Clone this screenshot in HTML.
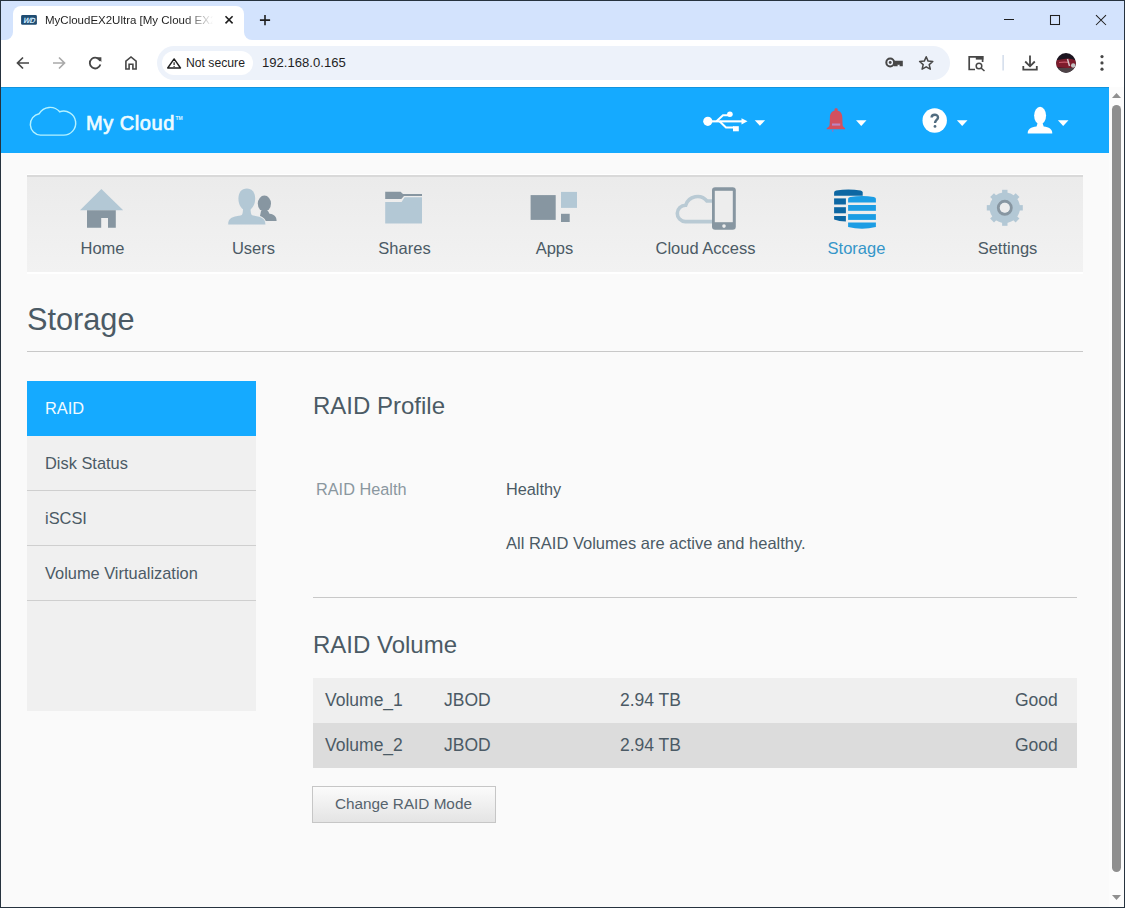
<!DOCTYPE html>
<html><head><meta charset="utf-8">
<style>
*{margin:0;padding:0;box-sizing:border-box}
html,body{width:1125px;height:908px;overflow:hidden;background:#fafafa;font-family:"Liberation Sans",sans-serif;position:relative}
div,svg,span{position:absolute}
.t{white-space:nowrap;color:#4b5a65;line-height:1}
.nl{top:240px;font-size:16.5px;width:151px;text-align:center;color:#4b5a65}
.mi{left:27px;width:229px;height:55px;background:#f0f0f0;border-bottom:1px solid #cfcfcf}
.mi span{left:18px;top:19px;font-size:16.4px;color:#4b5a65;line-height:1;white-space:nowrap}
.dd{width:0;height:0;border-left:5.5px solid transparent;border-right:5.5px solid transparent;border-top:6px solid #fff}
</style></head><body>
<!-- window frame -->
<div style="left:0;top:0;width:1125px;height:908px;background:#26323e"></div>
<div style="left:1px;top:1px;width:1123px;height:39px;background:#d3e3fd"></div>
<div style="left:1px;top:40px;width:1123px;height:47px;background:#fff"></div>
<!-- tab -->
<div style="left:5px;top:32px;width:8px;height:8px;background:#fff"></div>
<div style="left:5px;top:32px;width:8px;height:8px;background:#d3e3fd;border-radius:0 0 8px 0"></div>
<div style="left:244px;top:32px;width:8px;height:8px;background:#fff"></div>
<div style="left:244px;top:32px;width:8px;height:8px;background:#d3e3fd;border-radius:0 0 0 8px"></div>
<div style="left:13px;top:6px;width:231px;height:34px;background:#fff;border-radius:8px 8px 0 0"></div>
<!-- omnibox -->
<div style="left:157px;top:46px;width:793px;height:34px;background:#edf2fa;border-radius:17px"></div>
<div style="left:162px;top:51px;width:91px;height:24px;background:#fff;border-radius:12px"></div>
<!-- page -->
<div style="left:1px;top:87px;width:1108px;height:820px;background:#fafafa"></div>
<div style="left:1px;top:87px;width:1108px;height:66px;background:#15aaff"></div>
<div style="left:1px;top:87px;width:1123px;height:1px;background:rgba(0,0,0,0.13)"></div>
<!-- nav box -->
<div style="left:27px;top:174px;width:1056px;height:100px;background:#fff"></div>
<div style="left:27px;top:175px;width:1056px;height:97px;background:linear-gradient(#ebebeb,#f2f2f2);border-top:2px solid #d9d9d9"></div>
<div class="t nl" style="left:27px">Home</div>
<div class="t nl" style="left:178px">Users</div>
<div class="t nl" style="left:329px">Shares</div>
<div class="t nl" style="left:479px">Apps</div>
<div class="t nl" style="left:630px">Cloud Access</div>
<div class="t nl" style="left:781px;color:#3596c9">Storage</div>
<div class="t nl" style="left:932px">Settings</div>
<!-- title -->
<div class="t" style="left:27px;top:305px;font-size:30.7px">Storage</div>
<div style="left:27px;top:351px;width:1056px;height:1px;background:#c8c8c8"></div>
<!-- left menu -->
<div style="left:27px;top:381px;width:229px;height:330px;background:#f0f0f0"></div>
<div class="mi" style="top:381px;background:#15aaff;border-bottom:none"><span style="color:#f2fbff">RAID</span></div>
<div class="mi" style="top:436px"><span>Disk Status</span></div>
<div class="mi" style="top:491px"><span>iSCSI</span></div>
<div class="mi" style="top:546px"><span>Volume Virtualization</span></div>
<!-- content -->
<div class="t" style="left:313px;top:394px;font-size:24px">RAID Profile</div>
<div class="t" style="left:316px;top:481px;font-size:16.3px;color:#8a979f">RAID Health</div>
<div class="t" style="left:506px;top:481px;font-size:16.3px">Healthy</div>
<div class="t" style="left:506px;top:535px;font-size:16.5px">All RAID Volumes are active and healthy.</div>
<div style="left:313px;top:597px;width:764px;height:1px;background:#c8c8c8"></div>
<div class="t" style="left:313px;top:633px;font-size:24px">RAID Volume</div>
<div style="left:313px;top:678px;width:764px;height:45px;background:#efefef"></div>
<div style="left:313px;top:723px;width:764px;height:45px;background:#dcdcdc"></div>
<div class="t" style="left:325px;top:691.5px;font-size:17.5px">Volume_1</div>
<div class="t" style="left:444px;top:691.5px;font-size:17.5px">JBOD</div>
<div class="t" style="left:620px;top:691.5px;font-size:17.5px">2.94 TB</div>
<div class="t" style="left:1015px;top:691.5px;font-size:17.5px">Good</div>
<div class="t" style="left:325px;top:736.5px;font-size:17.5px">Volume_2</div>
<div class="t" style="left:444px;top:736.5px;font-size:17.5px">JBOD</div>
<div class="t" style="left:620px;top:736.5px;font-size:17.5px">2.94 TB</div>
<div class="t" style="left:1015px;top:736.5px;font-size:17.5px">Good</div>
<div style="left:312px;top:786px;width:184px;height:37px;border:1px solid #c6c6c6;background:linear-gradient(#fbfbfb,#e4e4e4)"></div>
<div class="t" style="left:335px;top:796px;font-size:15.3px;color:#56636d">Change RAID Mode</div>
<!-- scrollbar -->
<div style="left:1109px;top:87px;width:15px;height:820px;background:#fcfcfc"></div>
<div style="left:1112px;top:105px;width:9px;height:767px;background:#8f8f8f;border-radius:4.5px"></div>
<!--CHROME-->
<div class="t" style="left:45px;top:15px;font-size:11.5px;color:#1f1f1f;width:170px;overflow:hidden;-webkit-mask-image:linear-gradient(90deg,#000 140px,transparent 168px)">MyCloudEX2Ultra [My Cloud EX2Ultra]</div>
<div class="t" style="left:186px;top:57px;font-size:12.2px;color:#1f1f1f">Not secure</div>
<div class="t" style="left:262px;top:56px;font-size:13.1px;color:#1f1f1f">192.168.0.165</div>
<div class="t" style="left:86px;top:113px;font-size:20px;color:#eefcff;-webkit-text-stroke:0.7px #eefcff;letter-spacing:0.55px">My Cloud</div>
<div class="t" style="left:175.5px;top:115.5px;font-size:5px;font-weight:bold;color:#dff8ff">TM</div>
<svg style="left:0;top:0" width="1125" height="100" viewBox="0 0 1125 100">
<!-- favicon -->
<rect x="21.1" y="15.1" width="15.8" height="9.7" rx="1.4" fill="#1f4c72"/>
<text x="29" y="22.6" font-family="Liberation Sans" font-size="7.6" font-weight="bold" font-style="italic" fill="#cdeaff" text-anchor="middle" letter-spacing="-0.6" transform="translate(3.6,0) skewX(-10)">WD</text>
<!-- tab close -->
<path d="M225.5,16.3 L232.6,23.4 M232.6,16.3 L225.5,23.4" stroke="#1f1f1f" stroke-width="1.6"/>
<!-- new tab plus -->
<path d="M265,15 V25.2 M259.9,20.1 H270.1" stroke="#1f1f1f" stroke-width="1.6"/>
<!-- window controls -->
<path d="M1004,19.5 H1014" stroke="#1f1f1f" stroke-width="1.05"/>
<rect x="1050.5" y="15.5" width="9" height="9" fill="none" stroke="#1f1f1f" stroke-width="1.05"/>
<path d="M1096,15.2 L1106,25 M1106,15.2 L1096,25" stroke="#1f1f1f" stroke-width="1.05"/>
<!-- back -->
<path d="M29,63 H17.8 M23,57.5 L17.5,63 L23,68.5" fill="none" stroke="#474747" stroke-width="1.7"/>
<!-- forward -->
<path d="M53,63 H64.2 M59,57.5 L64.5,63 L59,68.5" fill="none" stroke="#a9a9a9" stroke-width="1.7"/>
<!-- reload -->
<path d="M100.2,61 A5.4,5.4 0 1 0 100.4,64.6" fill="none" stroke="#474747" stroke-width="1.8"/>
<polygon points="96.6,57.2 101.4,57.2 101.4,62 " fill="#474747"/>
<!-- home -->
<path d="M125.9,69 V61.2 L131,57 L136.1,61.2 V69 H132.9 V64.2 H129.1 V69 Z" fill="none" stroke="#474747" stroke-width="1.6" stroke-linejoin="miter"/>
<!-- warning -->
<path d="M174.1,58.9 L180.5,68 H167.7 Z" fill="none" stroke="#1f1f1f" stroke-width="1.4" stroke-linejoin="round"/>
<path d="M174.1,62.3 V65" stroke="#1f1f1f" stroke-width="1.2"/>
<circle cx="174.1" cy="66.4" r="0.65" fill="#1f1f1f"/>
<!-- key -->
<circle cx="890.2" cy="62.5" r="3.9" fill="none" stroke="#474747" stroke-width="2"/>
<circle cx="890.2" cy="62.5" r="1.4" fill="#474747"/>
<path d="M894,60.7 H902.8 V66.3 H899.6 V64.6 H897.6 V66.3 H894 Z" fill="#474747"/>
<rect x="897.6" y="63" width="2" height="1.6" fill="#474747"/>
<!-- star -->
<path d="M926.2,56.8 L928.1,61.1 L932.8,61.5 L929.2,64.6 L930.3,69.2 L926.2,66.8 L922.1,69.2 L923.2,64.6 L919.6,61.5 L924.3,61.1 Z" fill="none" stroke="#474747" stroke-width="1.5" stroke-linejoin="round"/>
<!-- tab search -->
<path d="M975,69.5 H969.2 V56.9 H982.6 V62" fill="none" stroke="#474747" stroke-width="1.7"/>
<rect x="975.8" y="56" width="7.6" height="3.6" fill="#474747"/>
<circle cx="979" cy="66" r="2.8" fill="none" stroke="#474747" stroke-width="1.5"/>
<path d="M981,68 L984.5,71" stroke="#474747" stroke-width="1.6"/>
<!-- separator -->
<rect x="1002.5" y="55" width="1.2" height="15.5" fill="#c7d3e6"/>
<!-- download -->
<path d="M1030,55.5 V66 M1025.2,61.5 L1030,66.3 L1034.8,61.5 M1023.3,66 V69.7 H1036.8 V66" fill="none" stroke="#474747" stroke-width="1.8"/>
<!-- avatar -->
<clipPath id="avc"><circle cx="1066" cy="62.9" r="9.8"/></clipPath>
<g clip-path="url(#avc)">
<rect x="1056" y="53" width="20" height="20" fill="#1c1520"/>
<path d="M1055,60.5 Q1062,59 1068,58.5 Q1074,59 1077,61 V67.5 Q1066,68.5 1055,67 Z" fill="#7e1c2c"/>
<path d="M1059,62.5 Q1064,61.8 1068,62.3" stroke="#c85a6a" stroke-width="1.2" fill="none"/>
<path d="M1067.5,59 L1069.5,66" stroke="#d8c8cc" stroke-width="1.4"/>
<circle cx="1073.2" cy="65.5" r="2.2" fill="#c4c4c4"/>
<rect x="1055" y="68" width="22" height="6" fill="#4e4347"/>
</g>
<!-- menu dots -->
<circle cx="1102" cy="56.6" r="1.6" fill="#474747"/>
<circle cx="1102" cy="62.9" r="1.6" fill="#474747"/>
<circle cx="1102" cy="69.2" r="1.6" fill="#474747"/>
</svg>
<svg style="left:1109px;top:87px" width="15" height="819" viewBox="1109 87 15 819">
<polygon points="1112,98 1121,98 1116.5,93" fill="#8f8f8f"/>
<polygon points="1112,895 1121,895 1116.5,900" fill="#8f8f8f"/>
</svg>
<!--/CHROME-->
<!--ICONS-->
<svg style="left:0;top:0" width="1125" height="908" viewBox="0 0 1125 908">
<!-- ===== nav icons ===== -->
<g id="home">
<polygon points="101.4,189 80,210.3 123.2,210.3" fill="#b3c8d5"/>
<path d="M87,210.3H115.8V227.7H87Z M101.2,218V227.7H108V218Z" fill="#8796a1" fill-rule="evenodd"/>
</g>
<g id="users">
<ellipse cx="264.4" cy="203.6" rx="6.6" ry="8" fill="#8796a1"/>
<path d="M261,211 H268 L269.5,213.8 C274.5,214.5 276.6,216.5 276.6,221 H259 Z" fill="#8796a1"/>
<g stroke="#ededed" stroke-width="1.8" fill="#b3c8d5">
<path d="M246.8,188.5 C252,188.5 255.2,192.5 255.2,198.8 C255.2,205 251.5,210.8 246.8,210.8 C242,210.8 238.4,205 238.4,198.8 C238.4,192.5 241.6,188.5 246.8,188.5 Z"/>
<path d="M228.2,224.4 C228.2,218.6 232,216.6 240.5,215.6 C242.6,215.2 243.1,213 243.1,205 H250.5 C250.5,213 251,215.2 253.1,215.6 C261.6,216.6 265.4,218.6 265.4,224.4 Z"/>
</g>
<path d="M246.8,188.5 C252,188.5 255.2,192.5 255.2,198.8 C255.2,205 251.5,210.8 246.8,210.8 C242,210.8 238.4,205 238.4,198.8 C238.4,192.5 241.6,188.5 246.8,188.5 Z" fill="#b3c8d5"/>
<path d="M228.2,224.4 C228.2,218.6 232,216.6 240.5,215.6 C242.6,215.2 243.1,213 243.1,205 H250.5 C250.5,213 251,215.2 253.1,215.6 C261.6,216.6 265.4,218.6 265.4,224.4 Z" fill="#b3c8d5"/>
</g>
<g id="shares">
<path d="M385.2,191.8 H400.6 L403,194 H422 V196 H404 L401.3,199 H385.2 Z" fill="#8796a1"/>
<path d="M385.2,202 H401.6 L404.6,197.2 H422 V223.5 H385.2 Z" fill="#b3c8d5"/>
</g>
<g id="apps">
<rect x="530.6" y="195.1" width="25.1" height="24.8" fill="#8796a1"/>
<rect x="561" y="191.9" width="16" height="16" fill="#b3c8d5"/>
<rect x="561" y="213.8" width="8.7" height="8.2" fill="#8796a1"/>
</g>
<g id="cloudaccess">
<path d="M712,221.6 H685.3 A8.2,8.2 0 1 1 685.7,205.2 A12.4,12.4 0 0 1 707,201 L712,201" fill="none" stroke="#b9cad4" stroke-width="3.6"/>
<rect x="712" y="187.2" width="23.8" height="42.5" rx="3.2" fill="#8796a1"/>
<rect x="714.8" y="190.8" width="18" height="31.4" fill="#ededed"/>
<circle cx="724" cy="226.1" r="1.8" fill="#ededed"/>
</g>
<g id="storage">
<path d="M834.1,195.7 V192.6 Q834.1,190.9 836.2,190.5 Q848.4,188.6 860.6,190.5 Q862.7,190.9 862.7,192.6 V195.7 Z" fill="#0d67a3"/>
<rect x="834.1" y="198.4" width="11.8" height="6.1" fill="#0d67a3"/>
<rect x="834.1" y="207.2" width="11.8" height="6.1" fill="#0d67a3"/>
<path d="M834.1,216 H845.9 V221.6 Q839,221.6 834.1,219.6 Z" fill="#0d67a3"/>
<path d="M848.1,202.5 V198.8 Q848.1,197.3 850.2,196.9 Q862,195.2 873.8,196.9 Q875.9,197.3 875.9,198.8 V202.5 Z" fill="#1c9de4"/>
<rect x="848.1" y="205" width="27.8" height="5.8" fill="#1c9de4"/>
<rect x="848.1" y="214.1" width="27.8" height="5.8" fill="#1c9de4"/>
<path d="M848.1,222.4 H875.9 V227 Q862,230.6 848.1,227 Z" fill="#1c9de4"/>
</g>
<g id="settings" transform="translate(1004.8,207.8)">
<g fill="#b3c8d5">
<circle r="15.2"/>
<rect x="-2.7" y="-18" width="5.4" height="36"/>
<rect x="-2.7" y="-18" width="5.4" height="36" transform="rotate(45)"/>
<rect x="-2.7" y="-18" width="5.4" height="36" transform="rotate(90)"/>
<rect x="-2.7" y="-18" width="5.4" height="36" transform="rotate(135)"/>
</g>
<circle r="6.5" fill="none" stroke="#8796a1" stroke-width="2.9"/>
<circle r="5" fill="#ededed"/>
</g>
<!-- ===== header icons ===== -->
<g id="logo">
<path d="M40.4,135.1 H63.2 A12,12 0 1 0 59.7,111.8 A12.6,12.6 0 0 0 39.2,113.7 A10.8,10.8 0 0 0 40.4,135.1 Z" fill="none" stroke="#b5f2ff" stroke-width="1.45"/>
</g>
<g id="usb" fill="#fff">
<circle cx="707.8" cy="121.3" r="4.6"/>
<rect x="708" y="120.3" width="34.5" height="2.1"/>
<polygon points="741.5,118.3 747.5,121.35 741.5,124.4"/>
<path d="M716.5,121.3 L723,115.2 H729" fill="none" stroke="#fff" stroke-width="2"/>
<circle cx="729.9" cy="114.2" r="2.8"/>
<path d="M719.5,121.3 L726,127.5 H734" fill="none" stroke="#fff" stroke-width="2"/>
<rect x="733" y="126.2" width="5.8" height="5.1"/>
</g>
<g fill="#fff">
<polygon points="754.7,120.3 765.1,120.3 759.9,125.7"/>
<polygon points="856,120.3 866.5,120.3 861.25,125.9"/>
<polygon points="956.9,120.2 967.5,120.2 962.2,126.1"/>
<polygon points="1057.9,120.2 1068.5,120.2 1063.2,125.9"/>
</g>
<g id="bell">
<rect x="834.6" y="108.3" width="3" height="3.2" rx="1" fill="#d2505f"/>
<path d="M836.1,110.6 C832.2,110.6 830.1,113 829.9,117.5 L829.6,125.3 Q829.3,126.9 826.7,128.2 V129.2 H845.1 V128.2 Q842.9,126.9 842.6,125.3 L842.3,117.5 C842.1,113 840,110.6 836.1,110.6 Z" fill="#d2505f"/>
<rect x="832" y="123.5" width="8.2" height="2.1" fill="#bb86c2"/>
<circle cx="832.7" cy="130.8" r="0.9" fill="#9a6fb8"/>
</g>
<g id="help">
<circle cx="934.7" cy="120.5" r="12.2" fill="#fff"/>
<path d="M931.6,117.6 C931.6,113.9 938,113.8 938,117.4 C938,119.9 935,120.1 935,123" fill="none" stroke="#516c80" stroke-width="2.4"/>
<circle cx="935" cy="126.4" r="1.4" fill="#516c80"/>
</g>
<g id="user" fill="#fff">
<ellipse cx="1040.1" cy="115.6" rx="6" ry="8.8"/>
<path d="M1027.7,133.6 C1027.7,128.8 1031,127.4 1036.5,126.6 L1037.6,123.2 H1042.6 L1043.7,126.6 C1049,127.4 1052.3,128.8 1052.3,133.6 Z"/>
</g>
</svg>
<!--/ICONS-->
</body></html>
